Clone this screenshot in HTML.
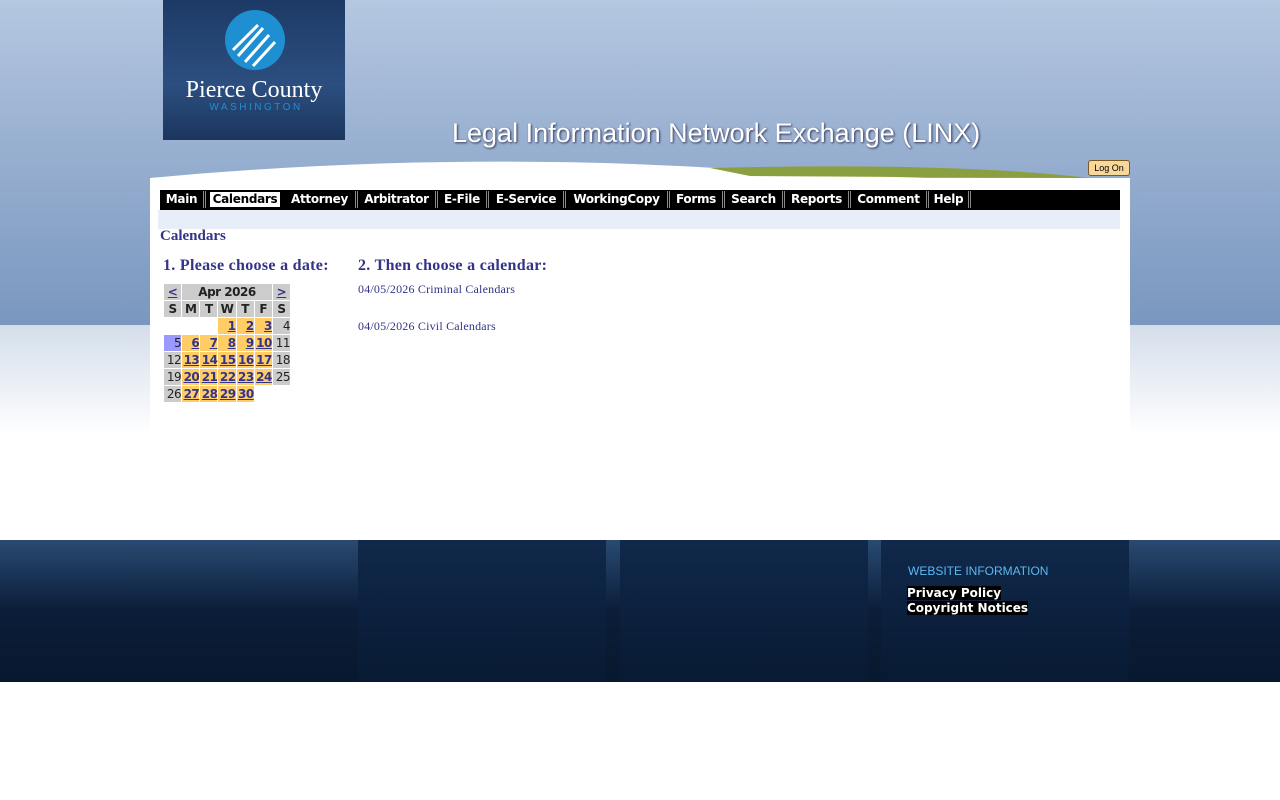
<!DOCTYPE html>
<html><head><style>
body{margin:0;width:1280px;height:800px;position:relative;overflow:hidden;background:#fff;font-family:"Liberation Serif",serif}
.top{position:absolute;left:0;top:0;width:1280px;height:325px;background:linear-gradient(180deg,#b5c8e2 0%,#9bb2d2 40%,#7a97bf 100%)}
.fade{position:absolute;left:0;top:325px;width:1280px;height:110px;background:linear-gradient(180deg,#d4deea,#fff)}
.panel{position:absolute;left:150px;top:178px;width:980px;height:260px;background:#fff}
.logo{position:absolute;left:163px;top:0;width:182px;height:140px;background:linear-gradient(180deg,#1d3a66,#2c4f80 60%,#1b355e)}
.title{position:absolute;left:452px;top:118px;font:27px "Liberation Sans",sans-serif;color:#fff;text-shadow:1px 1px 2px #335}
.nav{position:absolute;left:160px;top:190px;width:960px;height:20px;background:#000;font:bold 12px "DejaVu Sans",sans-serif;color:#fff;letter-spacing:-0.3px}
.nav span{position:absolute;top:1px;height:17px;line-height:17px;box-sizing:border-box;border-right:3px double #888;text-align:center}
.band{position:absolute;left:158px;top:210px;width:962px;height:19px;background:#e8eef8}
h1{position:absolute;left:160px;top:228px;margin:0;font:bold 15px "Liberation Serif",serif;color:#333388}
.h2{position:absolute;top:257px;font:bold 16px "Liberation Serif",serif;color:#333388;letter-spacing:0.3px;white-space:nowrap}
.lnk{position:absolute;left:358px;font:12px "Liberation Serif",serif;color:#333388;letter-spacing:0.2px}
table{position:absolute;left:163px;top:283px;border-collapse:separate;border-spacing:1px;font:12px "DejaVu Sans",sans-serif;table-layout:fixed;width:128px}
td{padding:0;height:16px;text-align:right;line-height:16px;color:#222;overflow:visible;letter-spacing:-0.5px}
.g{background:#ccc}.o{background:#fc6;color:#333388;text-decoration:underline;font-weight:bold}
.hd td{background:#ccc;text-align:center;font-weight:bold}
.foot{position:absolute;left:0;top:540px;width:1280px;height:142px;background:linear-gradient(180deg,#294a72,#0b1d38 50%,#08182e)}
.col{position:absolute;top:540px;height:142px;background:linear-gradient(180deg,#10284a,#081a33)}
</style></head><body>
<div class="top"></div><div class="fade"></div>
<svg style="position:absolute;left:150px;top:150px" width="980" height="40"><path d="M0 28 Q300 0 600 20 Q800 32 980 30 L980 40 L0 40Z" fill="#fff"/><path d="M560 18 Q800 12 940 28 L600 26Z" fill="#8aa040"/></svg>
<div class="panel"></div>
<div class="logo">
<svg width="182" height="140"><circle cx="92" cy="40" r="30" fill="#1e8fd0"/><g stroke="#fff" stroke-width="3"><path d="M70 50 L95 25M75 56 L100 28M82 62 L106 35M90 66 L112 42"/></g>
<text x="91" y="97" text-anchor="middle" fill="#fff" font-family="Liberation Serif" font-size="24">Pierce County</text>
<text x="93" y="110" text-anchor="middle" fill="#1e8fd0" font-family="Liberation Sans" font-size="10" letter-spacing="2.5">WASHINGTON</text></svg></div>
<div class="title">Legal Information Network Exchange (LINX)</div>
<div style="position:absolute;left:1088px;top:160px;width:40px;height:14px;background:#f8d89a;border:1px solid #7a5a20;border-radius:3px;font:9px 'Liberation Sans',sans-serif;text-align:center;line-height:14px">Log On</div>
<div class="band"></div>
<div class="nav">
<span style="left:0;width:46px">Main</span><span style="left:50px;width:70px;background:#fff;color:#000;border:0;top:2px;height:15px;line-height:15px">Calendars</span><span style="left:124px;width:74px">Attorney</span><span style="left:198px;width:80px">Arbitrator</span><span style="left:278px;width:51px">E-File</span><span style="left:329px;width:77px">E-Service</span><span style="left:406px;width:104px">WorkingCopy</span><span style="left:510px;width:55px">Forms</span><span style="left:565px;width:60px">Search</span><span style="left:625px;width:66px">Reports</span><span style="left:691px;width:78px">Comment</span><span style="left:769px;width:42px">Help</span>
</div>
<h1>Calendars</h1>
<div class="h2" style="left:163px">1. Please choose a date:</div>
<div class="h2" style="left:358px">2. Then choose a calendar:</div>
<div class="lnk" style="top:282px">04/05/2026 Criminal Calendars</div>
<div class="lnk" style="top:319px">04/05/2026 Civil Calendars</div>
<table>
<tr class="hd"><td style="color:#333388;text-decoration:underline">&lt;</td><td colspan="5">Apr 2026</td><td style="color:#333388;text-decoration:underline">&gt;</td></tr>
<tr class="hd"><td>S</td><td>M</td><td>T</td><td>W</td><td>T</td><td>F</td><td>S</td></tr>
<tr><td></td><td></td><td></td><td class="o">1</td><td class="o">2</td><td class="o">3</td><td class="g">4</td></tr>
<tr><td style="background:#99f">5</td><td class="o">6</td><td class="o">7</td><td class="o">8</td><td class="o">9</td><td class="o">10</td><td class="g">11</td></tr>
<tr><td class="g">12</td><td class="o">13</td><td class="o">14</td><td class="o">15</td><td class="o">16</td><td class="o">17</td><td class="g">18</td></tr>
<tr><td class="g">19</td><td class="o">20</td><td class="o">21</td><td class="o">22</td><td class="o">23</td><td class="o">24</td><td class="g">25</td></tr>
<tr><td class="g">26</td><td class="o">27</td><td class="o">28</td><td class="o">29</td><td class="o">30</td><td></td><td></td></tr>
</table>
<div class="foot"></div>
<div class="col" style="left:358px;width:248px"></div>
<div class="col" style="left:620px;width:248px"></div>
<div class="col" style="left:881px;width:248px"></div>
<div style="position:absolute;left:908px;top:564px;font:12px 'Liberation Sans',sans-serif;color:#5cb8f0">WEBSITE INFORMATION</div>
<div style="position:absolute;left:907px;top:586px;font:bold 12px 'DejaVu Sans',sans-serif;color:#fff;line-height:15px"><span style="background:#000">Privacy Policy</span><br><span style="background:#000">Copyright Notices</span></div>
</body></html>
